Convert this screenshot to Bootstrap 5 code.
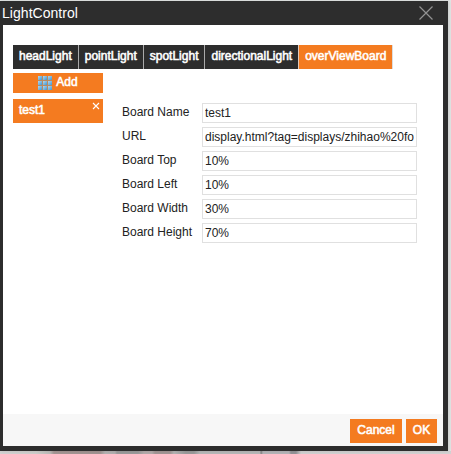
<!DOCTYPE html>
<html lang="en">
<head>
<meta charset="utf-8">
<meta name="viewport" content="width=device-width, initial-scale=1">
<title>LightControl</title>
<link rel="stylesheet" href="https://cdn.jsdelivr.net/npm/bootstrap@5.3.0/dist/css/bootstrap.min.css">
<style>
  body { font: 12px/16px "Liberation Sans", Arial, sans-serif; color: #222; height: 454px; padding-top: 1px;
    background: linear-gradient(90deg, #d2d2d2 0, #cdcdca 36px, #bbbab7 50px, #a49593 54px, #a09290 100px, #b3b1b1 105px, #b0aeae 115px, #9a9a9a 117px, #9a9a9a 138px, #b3aaaa 144px, #b3aaaa 152px, #a29594 155px, #a29594 170px, #b3b3b3 174px, #999 186px, #999 194px, #b5b7b7 200px, #b5b7b7 260px, #808080 261px, #b3b3b6 263px, #b3b3b6 289px, #929296 291px, #929296 296px, #cfcfcf 301px, #d2d2d2 451px) 0 451px / 100% 3px no-repeat, #e2e5e4; }
  .dialog { width: 448px; height: 450px; background: #2d2d2d; padding: 0 5px 5px 3px; box-shadow: 1px 0 3px rgba(0,0,0,.12); }
  .dialog-title { height: 24px; font-size: 14px; line-height: 25px; color: #fff; margin-left: -1px; padding-right: 9px; }
  .dialog-title span { letter-spacing: .04px; }
  .dialog-title button { width: 16px; height: 16px; }
  .dialog-main { padding: 20px 10px 0; }
  .tabs .nav-link { height: 24px; padding: 3px 6px 0; border-radius: 0; border-right: 1px solid #aaa; background: #2d2d2d; color: #fff; -webkit-text-stroke: .55px currentColor; line-height: 16px; white-space: nowrap; }
  .tabs .nav-link.active { background: #f47b20; border-right-color: #ddd; }
  .tabs .before-active { border-right-color: #e3cbbb; }
  .side { width: 90px; margin-top: 4px; }
  .btn-flat { background: #f47b20; color: #fff; font-size: 12px; -webkit-text-stroke: .55px currentColor; line-height: 16px; border: 0; border-radius: 0; padding: 0; }
  .btn-flat:hover { background: #e06c14; color: #fff; }
  .add { height: 20px; }
  .add svg { margin-top: 3px; flex: none; }
  .add span { margin-top: 1px; }
  .entry { height: 24px; margin-top: 6px; padding: 3px 3px 0 6px; }
  .fields { margin: 34px 0 0 19px; }
  .field { height: 20px; margin-bottom: 4px; }
  .field label { width: 80px; line-height: 18px; white-space: nowrap; }
  .field input { width: 215px; height: 20px; padding: 0 2px; border: 1px solid #e0e0e0; border-radius: 0; font-size: 12px; line-height: 18px; color: #222; min-height: 0; }
  .dialog-foot { height: 32px; background: #f7f7f7; padding: 5px 6px 0 0; gap: 4px; }
  .dialog-foot .btn-flat { height: 24px; padding-bottom: 2px; }
  .cancel { width: 52px; }
  .ok { width: 31px; }
</style>
</head>
<body class="overflow-hidden">
<div class="dialog d-flex flex-column">
  <header class="dialog-title d-flex align-items-center justify-content-between">
    <span>LightControl</span>
    <button class="btn p-0 border-0 d-flex" aria-label="Close">
      <svg width="16" height="16" viewBox="0 0 16 16" fill="none" stroke="#929292" stroke-width="1.2"><path d="M1.500 1.500l13 13M14.500 1.500l-13 13"/></svg>
    </button>
  </header>
  <main class="dialog-main bg-white flex-grow-1">
    <nav class="tabs nav nav-pills flex-nowrap">
      <a class="nav-link" href="#">headLight</a>
      <a class="nav-link" href="#">pointLight</a>
      <a class="nav-link" href="#">spotLight</a>
      <a class="nav-link before-active" href="#">directionalLight</a>
      <a class="nav-link active" href="#">overViewBoard</a>
    </nav>
    <div class="d-flex align-items-start">
      <div class="side d-flex flex-column">
        <button class="btn btn-flat add d-flex justify-content-center">
          <svg class="me-1" width="14" height="14" viewBox="0 0 14 14">
            <defs><linearGradient id="tile" x2="1" y2="1"><stop stop-color="#b5d8ef"/><stop offset="1" stop-color="#3f97d3"/></linearGradient></defs>
            <path fill="#b98a62" d="M0 0h14v14H0z"/>
            <g fill="url(#tile)"><path d="M0 0h4v4H0z"/><path d="M5 0h4v4H5z"/><path d="M10 0h4v4h-4z"/><path d="M0 5h4v4H0z"/><path d="M5 5h4v4H5z"/><path d="M10 5h4v4h-4z"/><path d="M0 10h4v4H0z"/><path d="M5 10h4v4H5z"/><path d="M10 10h4v4h-4z"/></g>
          </svg>
          <span>Add</span>
        </button>
        <div class="btn-flat entry d-flex justify-content-between">
          <span>test1</span>
          <svg width="8" height="8" viewBox="0 0 8 8" fill="none" stroke="#fff" stroke-width="1.1"><path d="M1 1l6 6M7 1L1 7"/></svg>
        </div>
      </div>
      <form class="fields">
        <div class="field d-flex"><label for="f1">Board Name</label><input id="f1" class="form-control" value="test1"></div>
        <div class="field d-flex"><label for="f2">URL</label><input id="f2" class="form-control" value="display.html?tag=displays/zhihao%20fo"></div>
        <div class="field d-flex"><label for="f3">Board Top</label><input id="f3" class="form-control" value="10%"></div>
        <div class="field d-flex"><label for="f4">Board Left</label><input id="f4" class="form-control" value="10%"></div>
        <div class="field d-flex"><label for="f5">Board Width</label><input id="f5" class="form-control" value="30%"></div>
        <div class="field d-flex"><label for="f6">Board Height</label><input id="f6" class="form-control" value="70%"></div>
      </form>
    </div>
  </main>
  <footer class="dialog-foot d-flex justify-content-end">
    <button class="btn btn-flat cancel">Cancel</button>
    <button class="btn btn-flat ok">OK</button>
  </footer>
</div>
<script src="https://cdn.jsdelivr.net/npm/bootstrap@5.3.0/dist/js/bootstrap.bundle.min.js"></script>
</body>
</html>
